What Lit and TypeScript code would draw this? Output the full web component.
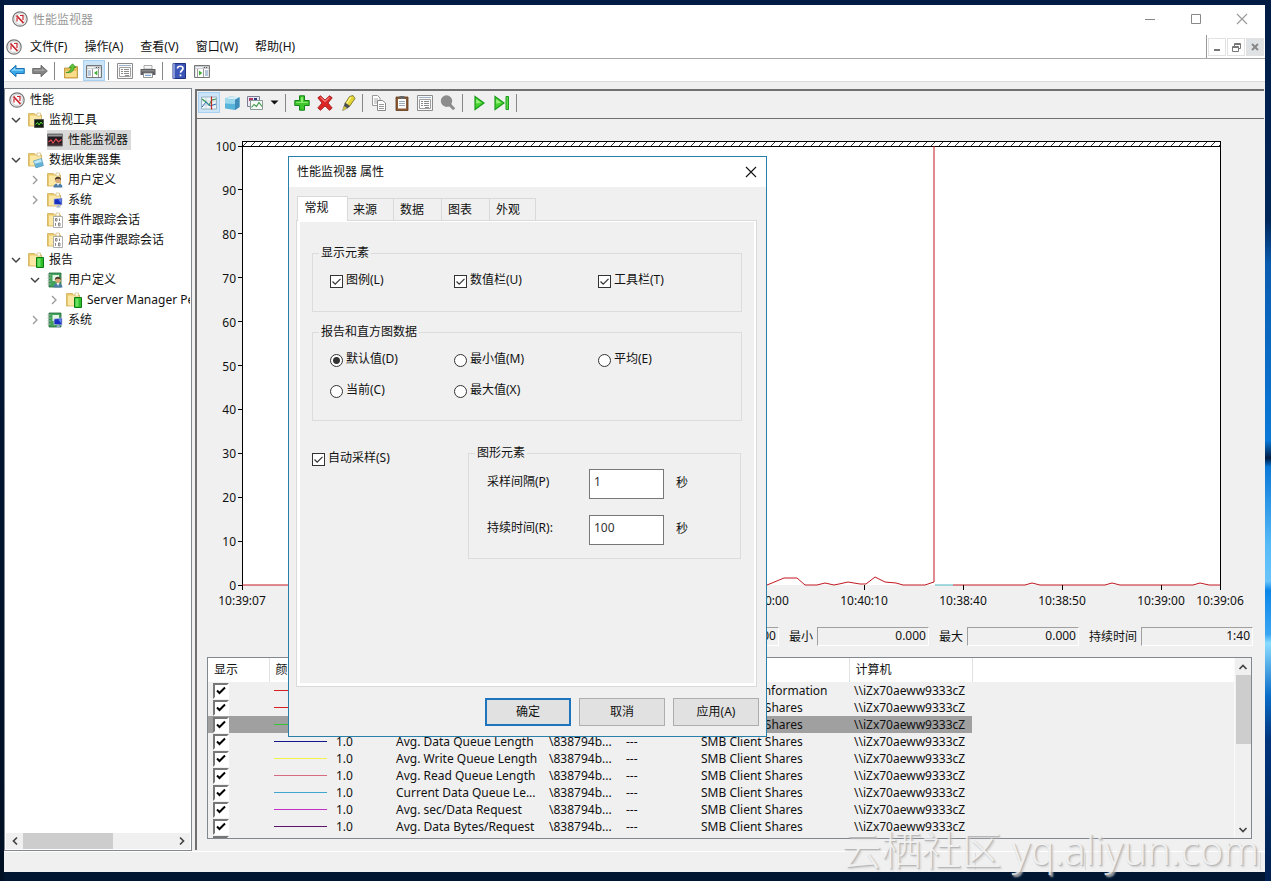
import { LitElement, html, svg, css } from "lit";
import { customElement } from "lit/decorators.js";
import { classMap } from "lit/directives/class-map.js";
import { styleMap } from "lit/directives/style-map.js";

const base = css`
  * { box-sizing: border-box; }
  :host { box-sizing: border-box; font: 12px/16px "Noto Sans", "Noto Sans CJK SC", sans-serif; color: #111; }
  button { font: inherit; color: inherit; border: 0; padding: 0; margin: 0; background: none; display: flex; align-items: center; justify-content: center; }
  svg { display: block; flex: none; }
  .tick { appearance: none; margin: 0; flex: none; width: 13px; height: 13px; border: 1px solid #333; background: #fff; }
  .tick:checked { background: #fff url("data:image/svg+xml,%3Csvg xmlns='http://www.w3.org/2000/svg' viewBox='0 0 11 11'%3E%3Cpath d='M1.5 5.5 4.2 8.2 9.5 2.8' fill='none' stroke='%23333' stroke-width='1.2'/%3E%3C/svg%3E"); }
`;

const folder = svg`<path d="M.5 1.500h6l1 1.500h6V14H.5z" fill="#e9c869" stroke="#c9a64b" stroke-width=".7"/><path d="M2 3.500h11v10H2z" fill="#fbe8a6"/><path d="M9 1h3.500v3H9z" fill="#fffdf0" stroke="#c9b06a" stroke-width=".6"/>`;
const person = svg`<path d="M6.500 15.500c0-3 1.500-4 4.300-4s4.700 1 4.700 4z" fill="#4a7ca8"/><path d="M9.500 11h3l-1.500 3z" fill="#f2f2f2"/><circle cx="11" cy="8" r="3" fill="#d9a877"/><path d="M7.800 8c0-4.500 6.300-4.500 6.300 0-2-1.800-4-1.800-6.300 0z" fill="#4d3a2c"/>`;
const monitor = svg`<path d="M7 7l8-1v7l-8-.5z" fill="#1b2fc0" stroke="#b8c4dd" stroke-width=".8"/><path d="M11 7.500l3-.5v4z" fill="#5b86f0"/><path d="M9 15.500l2-2.500 3 2.500z" fill="#9fb2d8"/>`;
const book = svg`<path d="M2 1h12v14H2z" fill="#43a25c" stroke="#1d6a38" stroke-width=".8"/><path d="M5.500 3h6.500v6H5.500z" fill="#e4f5e6"/><path d="M.5 3h3M.5 6h3M.5 9h3M.5 12h3" stroke="#a8b8a8" stroke-width="1.200"/>`;
const binary = svg`<path d="M6.500 4.500h9v11h-9z" fill="#fff" stroke="#999" stroke-width=".8"/><path d="M8.500 6.500h1.500v2.500H8.500zM12.500 6.500v2.500M8.500 11v2.800M11.500 11h1.500v2.800h-1.500z" fill="none" stroke="#777" stroke-width=".9"/>`;
const greenBox = svg`<path d="M8.500 5.500h7v10h-7z" fill="#2fbf2a" stroke="#0c7a14"/><path d="M9.500 6.500h3v8h-3z" fill="#6be062"/>`;
const graphWin = svg`<path d="M.5 2.500h15v12H.5z" fill="#c9ccd0" stroke="#777"/><path d="M1.500 6h13v8h-13z" fill="#fff"/><path d="M1.500 4.500h7" stroke="#f5f5f5"/><path d="M10 4.500h4" stroke="#555" stroke-dasharray="1 1"/>`;

const glyphs: Record<string, unknown> = {
  app: svg`<circle cx="8" cy="8" r="7.200" fill="#f4f4f4" stroke="#777" stroke-width="1.200"/><circle cx="8" cy="8" r="5.400" fill="#fff" stroke="#bbb" stroke-width=".7"/><path d="M4.500 4.500 11.500 12" stroke="#c8252d" stroke-width="1.800"/><path d="M5 10.500V6.500M8 4.500h3V9" fill="none" stroke="#c8252d" stroke-width="1.200"/>`,
  back: svg`<path d="M.7 8 7 2.300V5.500h8.300v5H7v3.200z" fill="#38a8e8" stroke="#1268a8" stroke-width=".9"/><path d="M2.500 7.800 6.200 4.500v2h8v1.200z" fill="#8fd6fa"/>`,
  forward: svg`<path d="M15.300 8 9 2.300V5.500H.7v5H9v3.200z" fill="#858585" stroke="#666" stroke-width=".9"/><path d="M2 6.700h8V5l3 2.700H2z" fill="#aaa"/>`,
  up: svg`<path d="M1.500 5h5l1-1.500h7V15h-13z" fill="#e9bf58" stroke="#b68e35" stroke-width=".8"/><path d="M2.500 8h11v6h-11z" fill="#f9dd8b"/><path d="M3 9.500C7 9 8 7 8 4.500H6L9.500.8 13 4.500h-2C11 8 8 10.500 3 9.500z" fill="#5fc43b" stroke="#2f8a22" stroke-width=".7"/>`,
  treeWin: svg`${graphWin}<path d="M2 8h3M2 10h3M2 12h3" stroke="#6a8fb8"/><path d="M6.500 6v8M12.500 6v8" stroke="#999"/><path d="M11.300 7.500v5L8 10z" fill="#3fae35"/>`,
  actionWin: svg`${graphWin}<path d="M11 8h3M11 10h3M11 12h3" stroke="#6a8fb8"/><path d="M9.500 6v8M3.500 6v8" stroke="#999"/><path d="M5 7.500v5L8.300 10z" fill="#3fae35"/>`,
  props: svg`<path d="M.5.5h15v15H.5z" fill="#f8f8f8" stroke="#8c8c8c"/><path d="M2 2.500h12" stroke="#9db4cc"/><path d="M2.500 4.500h11v9h-11z" fill="#fff" stroke="#a0a0a0"/><path d="M4 6.500h2M4 8.500h2M4 10.500h2M7 6.500h5M7 8.500h5M7 10.500h5M8 12.500h4" stroke="#8a8a8a"/>`,
  printer: svg`<path d="M4 2.500h8V6H4z" fill="#f5f5f5" stroke="#999" stroke-width=".8"/><path d="M.5 6h15v6H.5z" fill="#5c5f63"/><path d="M1.500 7h13v1.500h-13z" fill="#888"/><path d="M3.500 10h9v4.500h-9z" fill="#fff" stroke="#777" stroke-width=".8"/><path d="M5 12.300h6" stroke="#5a8cc8"/>`,
  help: svg`<path d="M2 .5h12.500v15H2z" fill="#3c56b8" stroke="#1f3280"/><path d="M2 .5h2v15H2z" fill="#8798d8"/><path d="M6.500 5.500c0-3 5.500-3 5.500 0 0 2-2.500 2-2.500 4.300M9.500 11.500v1.700" fill="none" stroke="#fff" stroke-width="1.700"/>`,
  line: svg`<path d="M.5 2h15v12H.5z" fill="#eef5f9" stroke="#87a7b8" stroke-width=".8"/><path d="M1 6h14M1 10h14M5 2v12" stroke="#b8cfda" stroke-width=".7"/><path d="M1 4l4 3 3 3 3-5 4-1" fill="none" stroke="#3d9a50" stroke-width="1.200"/><path d="M1 12l4-5 4 4 6-2" fill="none" stroke="#2f72b8"/><path d="M10.500 1.500v13" stroke="#c62828" stroke-width="1.200"/>`,
  cube: svg`<path d="M1 3.500 6 1.500l9.500.8V12L11 15l-10-1.500z" fill="#58b4d8"/><path d="M1 3.500 6 1.500l9.500.8L11 4.800z" fill="#d3eef8"/><path d="M11 4.800 15.500 2.300V12L11 15z" fill="#3f8db8"/><path d="M1 3.500l10 1.300V9L1 8.500z" fill="#9bd7ed"/>`,
  images: svg`<path d="M.5 1.500h12v10H.5z" fill="#e8e9f2" stroke="#7e7e93"/><path d="M2 3h4v3H2z" fill="#b03a6a"/><path d="M7 3h3v2H7z" fill="#333a80"/><path d="M3.500 5.500h12v9h-12z" fill="#f7fbf7" stroke="#8a9a96"/><path d="M4.500 12.500l2.500-3 2.500 2 2.500-4 3 4" fill="none" stroke="#3f9a4a" stroke-width="1.100"/>`,
  plus: svg`<path d="M5.500.8h5v4.700h4.700v5h-4.700v4.700h-5v-4.700H.8v-5h4.700z" fill="#3ec62c" stroke="#16831a"/><path d="M7 2.300h2V7h4.700v1H2.300V7H7z" fill="#8dec70"/>`,
  cross: svg`<path d="M3.500.8 8 5l4.500-4.200 2.700 2L11 8l4.200 5-2.700 2.300L8 11l-4.500 4.300L.8 13 5 8 .8 2.800z" fill="#dc2626" stroke="#9c1313" stroke-width=".8"/><path d="M3.500 2.300 8 6.500l4.500-4.200" fill="none" stroke="#f58080" stroke-width="1.100"/>`,
  marker: svg`<path d="M9.500 1.500 13 .5l2 3-5.500 8L5 8.500z" fill="#e4d534" stroke="#6e6820" stroke-width=".8"/><path d="M11 2 6.500 9" stroke="#fff89a" stroke-width="1.300"/><path d="M5 7.500l5 3.500-2.500 2.500L3.800 11z" fill="#4b4f52"/><path d="M3.800 11l3.500 2.300L2.500 15.800z" fill="#d8c928" stroke="#777" stroke-width=".5"/>`,
  copy: svg`<path d="M1.500.5h5l2.500 2.500v7.500H1.500z" fill="#fff" stroke="#999"/><path d="M3 4h4M3 6h4M3 8h4" stroke="#aaa"/><path d="M6.500 5.500h5L14.500 8v7.500h-8z" fill="#fff" stroke="#888"/><path d="M8 9.500h5M8 11.500h5M8 13.500h5" stroke="#999"/>`,
  paste: svg`<path d="M2 2h12v13.500H2z" fill="#8a5a34" stroke="#5f3a1c" stroke-width=".8"/><path d="M4 4h8v9.500H4z" fill="#fff"/><path d="M5.500 1h5v3h-5z" fill="#666"/><path d="M5 6.500h6M5 8.500h6M5 10.500h6" stroke="#9ab"/>`,
  zoom: svg`<circle cx="6.500" cy="6" r="5.700" fill="#8c8c8c"/><path d="M9.500 9.500l4.700 4.700" stroke="#8c8c8c" stroke-width="3"/><path d="M3 9.500h9v2H5z" fill="#8c8c8c"/>`,
  play: svg`<path d="M4 1.500 13 8 4 14.500z" fill="#45d22f" stroke="#1c9c1c" stroke-width="1.200"/><path d="M5.200 4v4.500l5-.8z" fill="#9df07f"/>`,
  step: svg`<path d="M1 1.500 10 8 1 14.500z" fill="#45d22f" stroke="#1c9c1c" stroke-width="1.200"/><path d="M2.200 4v4.500l5-.8z" fill="#9df07f"/><path d="M12 1.500h2.500v13H12z" fill="#5bd848" stroke="#1c9c1c"/>`,
  tools: svg`${folder}<path d="M6.500 7.500h9v8h-9z" fill="#10220f" stroke="#555"/><path d="M7.500 12.500l2-2 1.500 2.500 2-3 1.500 2" fill="none" stroke="#5fdb3b"/>`,
  perf: svg`<path d="M.5 2h15v12H.5z" fill="#221c22" stroke="#777"/><path d="M1 2.500h14v2H1z" fill="#999"/><path d="M1.500 10l2.500-2 2 3 3-4 2.500 3 3-2.500" fill="none" stroke="#e04a55" stroke-width="1.200"/><path d="M1 12h14" stroke="#844" stroke-width=".6"/>`,
  sets: svg`${folder}<path d="M5.500 9l8-2.500 2 7-7.500 2.500z" fill="#63b3d8" stroke="#4a90b4" stroke-width=".6"/><path d="M6 9.300l7-2.300.8 3-7 1.700z" fill="#bfe6f4"/>`,
  folderUser: svg`${folder}${person}`,
  folderSys: svg`${folder}${monitor}`,
  folderBin: svg`${folder}${binary}`,
  report: svg`${folder}${greenBox}`,
  bookUser: svg`${book}${person}`,
  bookSys: svg`${book}${monitor}`,
  down: svg`<path d="M4 6l4 4 4-4" fill="none" stroke="#444" stroke-width="1.500"/>`,
  right: svg`<path d="M6 4l4 4-4 4" fill="none" stroke="#999" stroke-width="1.300"/>`,
  scrollUp: svg`<path d="M4.500 10 8 6.500l3.500 3.500" fill="none" stroke="#444" stroke-width="1.700"/>`,
  scrollDown: svg`<path d="M4.500 6 8 9.500 11.500 6" fill="none" stroke="#444" stroke-width="1.700"/>`,
  scrollLeft: svg`<path d="M10 4.500 6.500 8l3.500 3.500" fill="none" stroke="#444" stroke-width="1.700"/>`,
  scrollRight: svg`<path d="M6 4.500 9.500 8 6 11.500" fill="none" stroke="#444" stroke-width="1.700"/>`,
  min: svg`<path d="M3 8.500h10" stroke="#888"/>`,
  max: svg`<path d="M3.500 3.500h9v9h-9z" fill="none" stroke="#888"/>`,
  close: svg`<path d="M3 3l10 10M13 3 3 13" stroke="currentColor" stroke-width="1.100"/>`,
  mdiMin: svg`<path d="M5 11h6" stroke="#777" stroke-width="2"/>`,
  mdiRestore: svg`<path d="M4.500 7.500h6v5h-6zM6.500 7V4.500h6v5H11M4.500 8.500h6M6.500 5.500h6" fill="none" stroke="#777"/>`,
  mdiClose: svg`<path d="M5 5l6 6M11 5l-6 6" stroke="#888" stroke-width="2"/>`,
};

const icon = (name: string) =>
  html`<svg width="16" height="16" viewBox="0 0 16 16" aria-hidden="true">${glyphs[name]}</svg>`;

interface TreeRow { level: number; icon: string; text: string; open?: boolean; selected?: boolean; }

@customElement("console-tree")
class ConsoleTree extends LitElement {
  static styles = [base, css`
    :host { display: flex; flex-direction: column; background: #fff; border: 1px solid #828790; overflow: hidden; padding: 1px; }
    .rows { flex: 1; margin: 0; padding: 0; list-style: none; overflow: hidden; }
    .row { display: flex; align-items: center; height: 20px; white-space: nowrap; }
    .row > * { flex: none; }
    .gap { width: 19px; }
    .toggle { width: 19px; height: 20px; padding-right: 5px; }
    .label { padding: 0 3px 0 5px; line-height: 20px; }
    .picked { background: #d9d9d9; }
    .bar { display: flex; align-items: center; height: 16px; background: #f0f0f0; }
    .bar button { width: 17px; height: 16px; }
    .thumb { width: 90px; height: 16px; background: #cdcdcd; }
    .space { flex: 1; }
  `];
  rows: TreeRow[] = [
    { level: 0, icon: "app", text: "性能" },
    { level: 1, icon: "tools", text: "监视工具", open: true },
    { level: 2, icon: "perf", text: "性能监视器", selected: true },
    { level: 1, icon: "sets", text: "数据收集器集", open: true },
    { level: 2, icon: "folderUser", text: "用户定义", open: false },
    { level: 2, icon: "folderSys", text: "系统", open: false },
    { level: 2, icon: "folderBin", text: "事件跟踪会话" },
    { level: 2, icon: "folderBin", text: "启动事件跟踪会话" },
    { level: 1, icon: "report", text: "报告", open: true },
    { level: 2, icon: "bookUser", text: "用户定义", open: true },
    { level: 3, icon: "report", text: "Server Manager Performance Monitor", open: false },
    { level: 2, icon: "bookSys", text: "系统", open: false },
  ];
  render() {
    return html`
      <ul class="rows">${this.rows.map((r) => html`
        <li class="row">
          <span style=${styleMap({ width: 3 + Math.max(0, r.level - 1) * 19 + "px" })}></span>
          ${r.level === 0 ? "" : r.open === undefined ? html`<span class="gap"></span>`
            : html`<button class="toggle" aria-label="展开或折叠">${icon(r.open ? "down" : "right")}</button>`}
          <span class=${classMap({ picked: !!r.selected, row: true })}>${icon(r.icon)}<span class="label">${r.text}</span></span>
        </li>`)}
      </ul>
      <div class="bar"><button aria-label="向左">${icon("scrollLeft")}</button><span class="thumb"></span><span class="space"></span><button aria-label="向右">${icon("scrollRight")}</button></div>`;
  }
}

const W = 978, H = 439;
const times = [[0, "10:39:07"], [523, "10:40:00"], [622, "10:40:10"], [721, "10:38:40"], [820, "10:38:50"], [919, "10:39:00"], [978, "10:39:06"]] as const;

@customElement("perf-chart")
class PerfChart extends LitElement {
  static styles = [base, css`
    :host { display: flex; padding: 27px 44px 42px 45px; min-height: 0; }
    .plot { flex: 1; overflow: visible; min-width: 0; height: auto; }
    .plot text { font-size: 12px; fill: #111; }
    .trace { fill: none; stroke: #c01820; vector-effect: non-scaling-stroke; }
  `];
  render() {
    const pct = (x: number) => (x / W) * 100 + "%";
    return html`<svg class="plot" width="100%" role="img" aria-label="性能图表">
      <defs><pattern id="hatch" width="8" height="6" patternUnits="userSpaceOnUse" y="-6"><path d="M1 6 7 0" stroke="#333" stroke-width="1"/></pattern></defs>
      <rect x="0" y="-5" width="100%" height="5" fill="#fff"/><rect x="0" y="-5" width="100%" height="5" fill="url(#hatch)"/>
      <rect x="0" y="0" width="100%" height="100%" fill="#fff"/>
      <g stroke="#000" shape-rendering="crispEdges">
        <line x1="0" x2="100%" y1="-5" y2="-5"/><line x1="0" x2="100%" y1="0" y2="0"/>
        <line x1="0" x2="0" y1="-5" y2="100%"/><line x1="100%" x2="100%" y1="-5" y2="100%"/>
        ${Array.from({ length: 11 }, (_, i) => svg`<line x1="-4" x2="0" y1=${i * 10 + "%"} y2=${i * 10 + "%"}/>`)}
      </g>
      ${Array.from({ length: 11 }, (_, i) => svg`<text x="-6" y=${i * 10 + "%"} dy="5" text-anchor="end">${100 - i * 10}</text>`)}
      <svg width="100%" height="100%" viewBox="0 0 ${W} ${H}" preserveAspectRatio="none" overflow="visible">
        <path class="trace" d="M0 439H525L530 437 542 432H555L563 439H575L583 437 592 439 597 438 606 436 618 438 624 438 633 431 643 436 654 437 661 439H683L692 436V0"/>
        <path class="trace" d="M711 439H783L790 437 798 439H863L870 437 878 439H951L958 437 967 439H978"/>
        <path d="M693 439H711" stroke="#49b7c4" vector-effect="non-scaling-stroke"/>
      </svg>
      ${times.map(([x, t]) => svg`<svg x=${pct(x)} y="100%" overflow="visible"><path d="M.5 0v5" stroke="#000"/><text y="20" text-anchor="middle">${t}</text></svg>`)}
    </svg>`;
  }
}

const counters = [
  ["#d42020", "1.0", "% Processor Time", "_Total", "Processor Information"],
  ["#d42020", "1.0", "Avg. sec/Write", "\\838794b...", "SMB Client Shares"],
  ["#35c435", "1.0", "Avg. sec/Read", "\\838794b...", "SMB Client Shares"],
  ["#16168c", "1.0", "Avg. Data Queue Length", "\\838794b...", "SMB Client Shares"],
  ["#f2f24a", "1.0", "Avg. Write Queue Length", "\\838794b...", "SMB Client Shares"],
  ["#d66a80", "1.0", "Avg. Read Queue Length", "\\838794b...", "SMB Client Shares"],
  ["#3fa7cf", "1.0", "Current Data Queue Le...", "\\838794b...", "SMB Client Shares"],
  ["#c330c8", "1.0", "Avg. sec/Data Request", "\\838794b...", "SMB Client Shares"],
  ["#5c1468", "1.0", "Avg. Data Bytes/Request", "\\838794b...", "SMB Client Shares"],
];
const columns: [string, number][] = [["显示", 61], ["颜色", 62], ["比例", 60], ["计数器", 153], ["实例", 77], ["父系", 75], ["对象", 153], ["计算机", 123]];

@customElement("counter-legend")
class CounterLegend extends LitElement {
  static styles = [base, css`
    :host { display: flex; height: 182px; border: 1px solid #828790; background: #f0f0f0; overflow: hidden; }
    .view { flex: 1; overflow: hidden; }
    table { width: 100%; table-layout: fixed; border-collapse: collapse; }
    th { height: 24px; padding: 0 0 0 6px; background: #fff; border-right: 1px solid #e2e2e2; font-weight: normal; text-align: left; }
    th:last-child { border: 0; }
    td { height: 17px; padding: 0 0 0 5px; line-height: 17px; white-space: nowrap; overflow: hidden; }
    .picked td:not(:last-child) { background: #a0a0a0; }
    .swatch { width: 53px; height: 1px; }
    .show { appearance: none; display: block; margin: 0; width: 16px; height: 16px; border: 2px solid; border-color: #777 #fff #fff #777; background: #fff; }
    .show:checked { background: #fff url("data:image/svg+xml,%3Csvg xmlns='http://www.w3.org/2000/svg' viewBox='0 0 12 12'%3E%3Cpath d='M2 5.500 4.500 8 10 2.500' fill='none' stroke='%23000' stroke-width='2'/%3E%3C/svg%3E"); }
    .bar { display: flex; flex-direction: column; align-items: center; width: 17px; background: #f0f0f0; border-left: 1px solid #fafafa; }
    .bar button { width: 16px; height: 17px; }
    .thumb { width: 15px; height: 69px; background: #cdcdcd; }
    .space { flex: 1; }
  `];
  render() {
    return html`
      <div class="view"><table>
        <colgroup>${columns.map(([, w]) => html`<col style=${styleMap({ width: w + "px" })}>`)}<col></colgroup>
        <thead><tr>${columns.map(([n]) => html`<th>${n}</th>`)}<th></th></tr></thead>
        <tbody>${counters.map(([color, scale, name, inst, obj], i) => html`
          <tr class=${classMap({ picked: i === 2 })}>
            <td><input class="show" type="checkbox" checked aria-label=${name}></td>
            <td><div class="swatch" style=${styleMap({ background: color })}></div></td>
            <td>${scale}</td><td>${name}</td><td>${inst}</td><td>---</td><td>${obj}</td><td>\\\\iZx70aeww9333cZ</td><td></td>
          </tr>`)}
          <tr><td><input class="show" type="checkbox" aria-label="Data Bytes/sec"></td></tr></tbody>
      </table></div>
      <div class="bar"><button aria-label="向上">${icon("scrollUp")}</button><span class="thumb"></span><span class="space"></span><button aria-label="向下">${icon("scrollDown")}</button></div>`;
  }
}

@customElement("properties-dialog")
class PropertiesDialog extends LitElement {
  static styles = [base, css`
    :host { display: flex; flex-direction: column; width: 479px; height: 581px; background: #f0f0f0; border: 1px solid #2a7fa8; }
    .title { display: flex; align-items: center; justify-content: space-between; height: 30px; padding: 0 7px 0 8px; background: #fff; }
    .tabs { display: flex; align-items: flex-end; height: 33px; padding-left: 8px; }
    .tab { height: 22px; padding: 0 16px 0 5px; border: 1px solid #d9d9d9; border-bottom: 0; border-left: 0; }
    .tab:nth-child(n+3) { padding: 0 17px 0 6px; }
    .tab:last-child { padding-right: 15px; }
    .tab.on { height: 25px; width: 51px; margin-bottom: -1px; padding: 0 18px 2px 6px; background: #fff; border-left: 1px solid #d9d9d9; z-index: 1; }
    .page { flex: 1; margin: 0 9px 0 7px; border: 1px solid #d9d9d9; box-shadow: inset 3px -3px #fff, inset -2px 1px #fff; padding: 24px 14px 0 15px; display: flex; flex-direction: column; }
    fieldset { margin: 0; padding: 0; border: 1px solid #dcdcdc; min-width: 0; }
    legend { margin-left: 6px; padding: 0 2px; }
    .grid { display: grid; grid-template-columns: 124px 144px 1fr; padding: 11px 0 0 17px; row-gap: 15px; }
    .choice { display: flex; align-items: center; gap: 3px; }
    .choice input { margin-top: 2px; }
    .radio { appearance: none; margin: 0; flex: none; width: 13px; height: 13px; border: 1px solid #333; border-radius: 50%; background: #fff; }
    .radio:checked { background: radial-gradient(circle, #333 3px, #fff 4px); }
    .elements { height: 67px; }
    .values { height: 97px; margin-top: 12px; }
    .lower { display: flex; justify-content: space-between; align-items: flex-start; margin-top: 24px; }
    .lower .choice { margin-top: 5px; }
    .sampling { width: 273px; height: 114px; margin-right: 1px; }
    .field { display: grid; grid-template-columns: 102px 75px auto; align-items: center; padding: 8px 0 0 18px; }
    .field + .field { padding-top: 16px; }
    .field label { padding-bottom: 4px; }
    .field input { width: 75px; height: 30px; border: 1px solid #777; background: #fff; padding: 0 4px 5px; font: inherit; color: #333; border-radius: 0; }
    .unit { padding: 0 0 2px 12px; }
    .actions { display: flex; justify-content: flex-end; gap: 8px; padding: 11px 7px 10px 0; }
    .actions button { width: 86px; height: 28px; background: #e1e1e1; border: 1px solid #adadad; }
    .actions .main { border: 2px solid #1e74bd; }
  `];
  render() {
    const check = (t: string) => html`<label class="choice"><input class="tick" type="checkbox" checked>${t}</label>`;
    const radio = (t: string, on = false) => html`<label class="choice"><input class="radio" type="radio" name="value" ?checked=${on}>${t}</label>`;
    return html`
      <div class="title"><span>性能监视器 属性</span><button aria-label="关闭">${icon("close")}</button></div>
      <div class="tabs" role="tablist">${["常规", "来源", "数据", "图表", "外观"].map((t, i) => html`<button role="tab" class=${classMap({ tab: true, on: i === 0 })}>${t}</button>`)}</div>
      <div class="page">
        <fieldset class="elements"><legend>显示元素</legend><div class="grid">${["图例(L)", "数值栏(U)", "工具栏(T)"].map(check)}</div></fieldset>
        <fieldset class="values"><legend>报告和直方图数据</legend><div class="grid">
          ${radio("默认值(D)", true)}${radio("最小值(M)")}${radio("平均(E)")}${radio("当前(C)")}${radio("最大值(X)")}</div></fieldset>
        <div class="lower">
          ${check("自动采样(S)")}
          <fieldset class="sampling"><legend>图形元素</legend>
            <div class="field"><label for="interval">采样间隔(P)</label><input id="interval" value="1"><span class="unit">秒</span></div>
            <div class="field"><label for="duration">持续时间(R):</label><input id="duration" value="100"><span class="unit">秒</span></div>
          </fieldset>
        </div>
      </div>
      <div class="actions"><button class="main">确定</button><button>取消</button><button>应用(A)</button></div>`;
  }
}

@customElement("app-root")
class AppRoot extends LitElement {
  static styles = [base, css`
    :host { display: flex; min-height: 100vh; padding: 5px 6px 9px 4px;
      background: linear-gradient(#00183c, #00142e 60%, #001024) left / 4px 100% no-repeat,
        linear-gradient(#001c44 0, #00265a 25%, #0a5cb0 30%, #0a78d8 50%, #001c44 52%, #0a78d8 53%, #58bcf8 62%, #68c4fa 66%, #0a86e8 67%, #3aa6f2 72%, #8adcff 73%, #0a6cc8 79%, #00347c 84%, #002050 100%) right / 6px 100% no-repeat,
        linear-gradient(#001c44, #00265a 50%, #001630); }
    .window { position: relative; flex: 1; display: flex; flex-direction: column; min-width: 0; background: #f0f0f0; }
    .titlebar { display: flex; align-items: center; height: 28px; padding-left: 8px; background: #fff; color: #999; }
    .caption { padding: 1px 0 0 5px; }
    .fill { flex: 1; }
    .titlebar button { width: 46px; height: 28px; }
    .menubar { display: flex; align-items: center; height: 26px; padding: 2px 0 0 2px; background: #fff; border-bottom: 1px solid #a8a8a8; }
    .menus { display: flex; gap: 17px; padding: 0 0 0 8px; }
    .mdi { display: flex; gap: 1px; align-items: center; height: 23px; border-left: 1px solid #999; padding: 0 1px; }
    .mdi button { width: 18px; height: 18px; border: 1px solid #e2e2e2; }
    .mdi .off { background: #e0e3e6; }
    .tools { display: flex; align-items: center; height: 23px; padding: 1px 0 0 2px; background: #fff; border-bottom: 1px solid #dcdcdc; }
    .tool { width: 22px; height: 21px; margin-right: 1px; }
    .tool.on { background: #cce4f7; border: 1px solid #a8d0f0; }
    .sep { width: 1px; height: 18px; margin: 0 5px 0 2px; background: #888; }
    .body { flex: 1; display: flex; gap: 3px; padding-top: 6px; min-height: 0; }
    console-tree { width: 188px; }
    .pane { flex: 1; min-width: 0; display: flex; flex-direction: column; margin: 1px 1px 1px 0; border: 2px solid #707070; border-right: 0; border-bottom: 0; }
    .pane .tools { height: 28px; padding: 0 0 4px 1px; background: #f0f0f0; border-bottom: 1px solid #707070; }
    .caret { width: 15px; height: 22px; margin-right: 1px; }
    perf-chart { flex: 1; }
    .values { display: flex; justify-content: flex-end; gap: 10px; padding: 0 11px 11px; white-space: nowrap; }
    .value { display: flex; align-items: center; gap: 4px; }
    .value output { width: 112px; height: 19px; padding: 0 2px; text-align: right; border: 1px solid; border-color: #a0a0a0 #fff #fff #a0a0a0; }
    counter-legend { margin: 0 12px 11px 10px; }
    .status { display: flex; justify-content: flex-end; height: 21px; border-top: 1px solid #fff; padding: 1px 4px 2px 0; }
    .cell { width: 110px; border-left: 1px solid #dadada; }
    .cell.wide { width: 176px; border-right: 1px solid #dadada; }
    properties-dialog { position: absolute; left: 284px; top: 151px; }
    .mark { position: absolute; right: 6px; bottom: 0; font-size: 40px; line-height: 44px; font-weight: 300; color: #f0f0f0; text-shadow: 1px 1px 1px #aaa, 2px 2px 2px #ccc; white-space: nowrap; pointer-events: none; opacity: 0.85; }
  `];
  render() {
    const tool = (n: string, label: string, on = false) => html`<button class=${classMap({ tool: true, on })} aria-label=${label}>${icon(n)}</button>`;
    const sep = html`<span class="sep"></span>`;
    const value = (l: string, v: string) => html`<label class="value">${l}<output>${v}</output></label>`;
    return html`<div class="window">
      <div class="titlebar">${icon("app")}<span class="caption">性能监视器</span><span class="fill"></span>
        <button aria-label="最小化">${icon("min")}</button><button aria-label="最大化">${icon("max")}</button><button aria-label="关闭">${icon("close")}</button></div>
      <div class="menubar">${icon("app")}<div class="menus">${["文件(F)", "操作(A)", "查看(V)", "窗口(W)", "帮助(H)"].map((m) => html`<button>${m}</button>`)}</div><span class="fill"></span>
        <div class="mdi"><button aria-label="最小化子窗口">${icon("mdiMin")}</button><button aria-label="还原子窗口">${icon("mdiRestore")}</button><button class="off" aria-label="关闭子窗口">${icon("mdiClose")}</button></div></div>
      <div class="tools">${tool("back", "后退")}${tool("forward", "前进")}${sep}${tool("up", "向上一级")}${tool("treeWin", "控制台树", true)}${sep}${tool("props", "属性")}${tool("printer", "打印")}${sep}${tool("help", "帮助")}${tool("actionWin", "操作窗格")}</div>
      <div class="body">
        <console-tree></console-tree>
        <div class="pane">
          <div class="tools">${tool("line", "当前活动", true)}${tool("cube", "日志数据")}${tool("images", "图形类型")}<button class="caret" aria-label="更多"><svg width="9" height="5" viewBox="0 0 9 5"><path d="M.5.5h8l-4 4z" fill="#111"/></svg></button>${sep}${tool("plus", "添加")}${tool("cross", "删除")}${tool("marker", "突出显示")}${sep}${tool("copy", "复制")}${tool("paste", "粘贴")}${tool("props", "属性")}${tool("zoom", "缩放")}${sep}${tool("play", "取消冻结")}${tool("step", "更新数据")}${sep}</div>
          <perf-chart></perf-chart>
          <div class="values">${value("平均", "0.000")}${value("最小", "0.000")}${value("最大", "0.000")}${value("持续时间", "1:40")}</div>
          <counter-legend></counter-legend>
        </div>
      </div>
      <div class="status"><span class="cell"></span><span class="cell wide"></span></div>
      <properties-dialog></properties-dialog>
      <div class="mark">云栖社区 yq.aliyun.com</div>
    </div>`;
  }
}
